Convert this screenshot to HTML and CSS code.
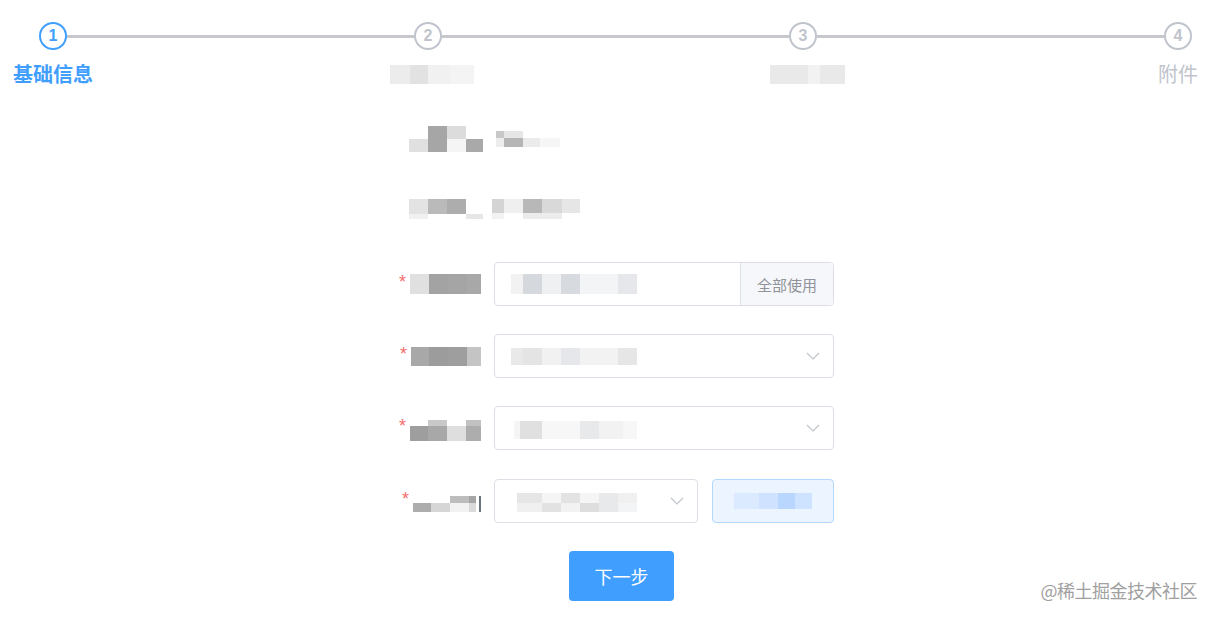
FILE: index.html
```html
<!DOCTYPE html>
<html lang="zh-CN">
<head>
<meta charset="utf-8">
<title>基础信息</title>
<link rel="stylesheet" href="styles.css">
</head>
<body>
<div class="page">
  <div class="steps">
    <div class="circle active c1">1</div>
    <div class="line l1"></div>
    <div class="circle c2">2</div>
    <div class="line l2"></div>
    <div class="circle c3">3</div>
    <div class="line l3"></div>
    <div class="circle c4">4</div>

    <div class="step-title t1 active">基础信息</div>
    <div class="step-title t2"><div class="mz mz-st2"><i class="ga"></i><i class="gb"></i><i class="gc"></i><i class="ga"></i></div></div>
    <div class="step-title t3"><div class="mz mz-st3"><i class="ga"></i><i class="ga"></i><i class="gc"></i><i class="ga"></i></div></div>
    <div class="step-title t4">附件</div>
  </div>

  <form class="form">
    <div class="form-item item-text item-r1">
      <div class="form-label">
        <div class="mz mz-r1l">
          <i></i><i class="g-e0"></i>
          <i class="g-a6"></i><i class="g-a6"></i>
          <i class="g-dc"></i><i class="g-f5"></i>
          <i></i><i class="g-a9"></i>
        </div>
      </div>
      <div class="form-content">
        <div class="mz mz-r1v">
          <i class="g-c8"></i><i class="g-ed"></i>
          <i class="g-e6"></i><i class="g-b5"></i>
          <i></i><i class="g-eb"></i>
          <i></i><i class="g-f6"></i>
        </div>
      </div>
    </div>

    <div class="form-item item-text item-r2">
      <div class="form-label">
        <div class="mz mz-r2l">
          <i class="g-e3"></i><i class="g-f0"></i>
          <i class="g-ba"></i><i></i>
          <i class="g-ad"></i><i></i>
          <i></i><i class="g-e6"></i>
        </div>
      </div>
      <div class="form-content">
        <div class="mz mz-r2v">
          <i class="g-d4"></i><i class="g-f2"></i>
          <i class="g-ef"></i><i></i>
          <i class="g-b8"></i><i class="g-ec"></i>
          <i class="g-d9"></i><i class="g-ec"></i>
          <i class="g-e6"></i><i></i>
        </div>
      </div>
    </div>

    <div class="form-item">
      <div class="form-label">
        <span class="req">*</span>
        <div class="mz mz-r3l"><i class="g-e0"></i><i class="g-a3"></i><i class="g-a5"></i><i class="g-a8"></i></div>
      </div>
      <div class="form-content">
        <div class="input-group">
          <div class="input">
            <div class="mz mz-r3v"><i class="g-f2"></i><i class="g-d5b"></i><i class="g-ee"></i><i class="g-d7b"></i><i class="g-f3"></i><i class="g-e5b"></i></div>
          </div>
          <div class="append">全部使用</div>
        </div>
      </div>
    </div>

    <div class="form-item">
      <div class="form-label">
        <span class="req">*</span>
        <div class="mz mz-r4l"><i class="g-a8"></i><i class="g-9c"></i><i class="g-9e"></i><i class="g-c4"></i></div>
      </div>
      <div class="form-content">
        <div class="select">
          <div class="mz mz-r4v"><i class="g-e9"></i><i class="g-e4"></i><i class="g-f1"></i><i class="g-e5b"></i><i class="g-f2"></i><i class="g-e6"></i></div>
          <svg class="chev" width="14" height="8" viewBox="0 0 14 8"><polyline points="1,1 7,7 13,1" fill="none" stroke="#c0c4cc" stroke-width="1.2"/></svg>
        </div>
      </div>
    </div>

    <div class="form-item item-r5">
      <div class="form-label">
        <span class="req">*</span>
        <div class="mz mz-r5l">
          <i></i><i class="g-9e"></i>
          <i class="g-c9"></i><i class="g-a8"></i>
          <i></i><i class="g-de"></i>
          <i class="g-c2"></i><i class="g-ad"></i>
        </div>
      </div>
      <div class="form-content">
        <div class="select">
          <div class="mz mz-r5v"><i class="g-f5"></i><i class="g-e0"></i><i class="g-f7"></i><i class="g-e8"></i><i class="g-f2"></i><i class="g-f7"></i></div>
          <svg class="chev" width="14" height="8" viewBox="0 0 14 8"><polyline points="1,1 7,7 13,1" fill="none" stroke="#c0c4cc" stroke-width="1.2"/></svg>
        </div>
      </div>
    </div>

    <div class="form-item">
      <div class="form-label">
        <span class="req">*</span>
        <div class="mz mz-r6l">
          <i></i><i class="g-ad"></i>
          <i></i><i class="g-d6"></i>
          <i class="g-bd"></i><i class="g-f2"></i>
          <i class="g-a6"></i><i class="g-da"></i>
          <i></i><i></i>
          <i class="g-mark"></i><i class="g-mark"></i>
        </div>
      </div>
      <div class="form-content split">
        <div class="select select-sm">
          <div class="mz mz-r6v">
            <i class="g-e6"></i><i class="g-f0"></i>
            <i class="g-f5"></i><i class="g-e2"></i>
            <i class="g-e3"></i><i class="g-f2"></i>
            <i class="g-f5"></i><i class="g-de"></i>
            <i class="g-e8"></i><i class="g-e8"></i>
            <i class="g-f0"></i><i class="g-f3"></i>
          </div>
          <svg class="chev" width="14" height="8" viewBox="0 0 14 8"><polyline points="1,1 7,7 13,1" fill="none" stroke="#c0c4cc" stroke-width="1.2"/></svg>
        </div>
        <button type="button" class="btn-plain">
          <span class="mz mz-btn"><i class="b1"></i><i class="b2"></i><i class="b3"></i><i class="b4"></i></span>
        </button>
      </div>
    </div>

    <div class="form-actions">
      <button type="button" class="btn-primary">下一步</button>
    </div>
  </form>

  <div class="watermark">@稀土掘金技术社区</div>
</div>
</body>
</html>
```

FILE: styles.css
```css
html, body {
  margin: 0;
  padding: 0;
  background: #ffffff;
}

body {
  font-family: "Noto Sans CJK SC", "Noto Sans", sans-serif;
  color: #606266;
}

.page {
  position: relative;
  width: 1216px;
  height: 619px;
  overflow: hidden;
}

/* ---------- steps ---------- */
.steps {
  display: grid;
  grid-template-columns: 28px 1fr 28px 1fr 28px 1fr 28px;
  grid-template-rows: 28px 24px;
  row-gap: 12px;
  padding: 22px 24px 0 39px;
}

.circle {
  grid-row: 1;
  box-sizing: border-box;
  width: 28px;
  height: 28px;
  border: 2px solid #c0c4cc;
  border-radius: 50%;
  display: flex;
  align-items: center;
  justify-content: center;
  font-family: "Liberation Sans", Arial, sans-serif;
  font-weight: bold;
  font-size: 16px;
  color: #c0c4cc;
  line-height: 1;
}

.circle.active {
  border-color: #409eff;
  color: #409eff;
}

.c1 { grid-column: 1; }
.c2 { grid-column: 3; }
.c3 { grid-column: 5; }
.c4 { grid-column: 7; }
.l1 { grid-column: 2; }
.l2 { grid-column: 4; }
.l3 { grid-column: 6; }

.line {
  grid-row: 1;
  align-self: center;
  height: 3px;
  background: #c6c8cc;
}

.step-title {
  grid-row: 2;
  justify-self: center;
  white-space: nowrap;
  font-size: 20px;
  line-height: 24px;
  color: #c0c4cc;
  display: flex;
  align-items: center;
}

.step-title.active {
  color: #409eff;
  font-weight: bold;
}

.t1 { grid-column: 1; }
.t2 { grid-column: 3; margin-left: 8px; }
.t3 { grid-column: 5; margin-left: 8px; }
.t4 { grid-column: 7; }

/* ---------- mosaic (pixelated hidden text) ---------- */
.mz {
  display: grid;
  grid-auto-flow: column;
  flex: none;
}

.mz i {
  display: block;
}

.mz-st2 {
  grid-template-columns: 20px 18px 22px 24px;
  grid-template-rows: 19px;
}
.mz-st2 .ga { background: #ececec; }
.mz-st2 .gb { background: #e2e2e2; }
.mz-st2 .gc { background: #f1f1f1; }
.mz-st2 i:last-child { background: #f4f4f4; }

.mz-st3 {
  grid-template-columns: 19px 19px 12px 25px;
  grid-template-rows: 19px;
}
.mz-st3 .ga { background: #e9e9e9; }
.mz-st3 .gc { background: #f2f2f2; }

.mz-r1l { grid-template-columns: 19px 19px 19px 17px; grid-template-rows: 13px 13px; margin-right: -2px; }
.mz-r1v { grid-template-columns: 8px 19px 17px 20px; grid-template-rows: 7px 9px; margin-left: 2px; }
.mz-r2l { grid-template-columns: 19px 19px 19px 17px; grid-template-rows: 15px 5px; margin-top: 2px; margin-right: -2px; }
.mz-r2v { grid-template-columns: 12px 19px 19px 20px 18px; grid-template-rows: 14px 6px; margin-left: -2px; margin-top: 2px; }
.mz-r3l { grid-template-columns: 19px 19px 19px 14px; grid-template-rows: 20px; }
.mz-r3v { grid-template-columns: 12px 19px 19px 19px 38px 19px; grid-template-rows: 20px; }
.mz-r4l { grid-template-columns: 18px 19px 19px 14px; grid-template-rows: 19px; }
.mz-r4v { grid-template-columns: 12px 19px 19px 19px 38px 19px; grid-template-rows: 17px; }
.mz-r5l { grid-template-columns: 18px 19px 19px 15px; grid-template-rows: 6px 15px; margin-top: 4px; }
.mz-r5v { grid-template-columns: 6px 22px 38px 19px 24px 14px; grid-template-rows: 18px; margin-left: 3px; margin-top: 4px; }
.mz-r6l { grid-template-columns: 18px 19px 19px 7px 3px 2px; grid-template-rows: 7px 9px; margin-top: 6px; }
.mz-r6v { grid-template-columns: 25px 19px 19px 19px 19px 19px; grid-template-rows: 10px 9px; margin-left: 6px; margin-top: 2px; }
.mz-btn { grid-template-columns: 25px 19px 17px 17px; grid-template-rows: 16px; }

.g-9c { background: #9c9c9c; }
.g-9e { background: #9e9e9e; }
.g-a3 { background: #a3a3a3; }
.g-a5 { background: #a5a5a5; }
.g-a6 { background: #a6a6a6; }
.g-a8 { background: #a8a8a8; }
.g-a9 { background: #a9a9a9; }
.g-ad { background: #adadad; }
.g-b5 { background: #b5b5b5; }
.g-b8 { background: #b8b8b8; }
.g-ba { background: #bababa; }
.g-bd { background: #bdbdbd; }
.g-c2 { background: #c2c2c2; }
.g-c4 { background: #c4c4c4; }
.g-c8 { background: #c8c8c8; }
.g-c9 { background: #c9c9c9; }
.g-d4 { background: #d4d4d4; }
.g-d6 { background: #d6d6d6; }
.g-d9 { background: #d9d9d9; }
.g-da { background: #dadada; }
.g-dc { background: #dcdcdc; }
.g-de { background: #dedede; }
.g-e0 { background: #e0e0e0; }
.g-e2 { background: #e2e2e2; }
.g-e3 { background: #e3e3e3; }
.g-e4 { background: #e4e4e4; }
.g-e6 { background: #e6e6e6; }
.g-e8 { background: #e8e9eb; }
.g-e9 { background: #e9e9e9; }
.g-eb { background: #ebebeb; }
.g-ec { background: #ececec; }
.g-ed { background: #ededed; }
.g-ee { background: #eef0f2; }
.g-ef { background: #efefef; }
.g-f0 { background: #f0f0f0; }
.g-f1 { background: #f1f1f1; }
.g-f2 { background: #f2f2f2; }
.g-f3 { background: #f3f4f6; }
.g-f5 { background: #f5f5f5; }
.g-f6 { background: #f6f6f6; }
.g-f7 { background: #f7f7f7; }
.g-d5b { background: #d5d8dc; }
.g-d7b { background: #d7dade; }
.g-e5b { background: #e5e7ea; }
.g-mark { background: #6b7280; }

.b1 { background: #dbeaff; }
.b2 { background: #cfe2ff; }
.b3 { background: #b9d6ff; }
.b4 { background: #cde3ff; }

/* ---------- form ---------- */
.form {
  width: 452px;
  margin: 31px auto 0;
}

.form-item {
  display: flex;
  align-items: center;
  height: 44px;
  margin-bottom: 28px;
}

.item-r1 { margin-bottom: 25px; }
.item-r2 { margin-bottom: 32px; }
.item-r5 { margin-bottom: 29px; }

.form-label {
  box-sizing: border-box;
  width: 112px;
  padding-right: 13px;
  display: flex;
  justify-content: flex-end;
  align-items: center;
  flex: none;
}

.req {
  color: #f56c6c;
  font-family: "Liberation Sans", Arial, sans-serif;
  font-size: 18px;
  line-height: 1;
  margin-right: 4px;
  margin-top: -4px;
}

.form-content {
  width: 340px;
  display: flex;
  align-items: center;
}

.form-content.split {
  gap: 14px;
}

.input-group {
  display: flex;
  width: 100%;
  height: 44px;
  box-sizing: border-box;
  border: 1px solid #dcdfe6;
  border-radius: 4px;
  overflow: hidden;
}

.input {
  flex: 1;
  display: flex;
  align-items: center;
  padding-left: 16px;
}

.append {
  box-sizing: border-box;
  width: 93px;
  border-left: 1px solid #dcdfe6;
  background: #f5f7fa;
  color: #909399;
  font-size: 15px;
  display: flex;
  align-items: center;
  justify-content: center;
}

.select {
  box-sizing: border-box;
  width: 100%;
  height: 44px;
  border: 1px solid #dcdfe6;
  border-radius: 4px;
  display: flex;
  align-items: center;
  justify-content: space-between;
  padding: 0 13px 0 16px;
}

.select-sm {
  width: 204px;
  flex: none;
}

.chev {
  display: block;
  flex: none;
}

.btn-plain {
  box-sizing: border-box;
  width: 122px;
  height: 44px;
  border: 1px solid #b3d8ff;
  background: #ecf5ff;
  border-radius: 4px;
  padding: 0;
  display: flex;
  align-items: center;
  justify-content: center;
  flex: none;
}

.form-actions {
  padding-left: 187px;
}

.btn-primary {
  width: 105px;
  height: 50px;
  border: none;
  border-radius: 4px;
  background: #409eff;
  color: #ffffff;
  font-family: "Noto Sans CJK SC", sans-serif;
  font-size: 18px;
  padding: 0;
}

.watermark {
  position: absolute;
  right: 19px;
  bottom: 17px;
  font-size: 18px;
  line-height: 24px;
  color: #a0a0a0;
  letter-spacing: -0.5px;
}
```
